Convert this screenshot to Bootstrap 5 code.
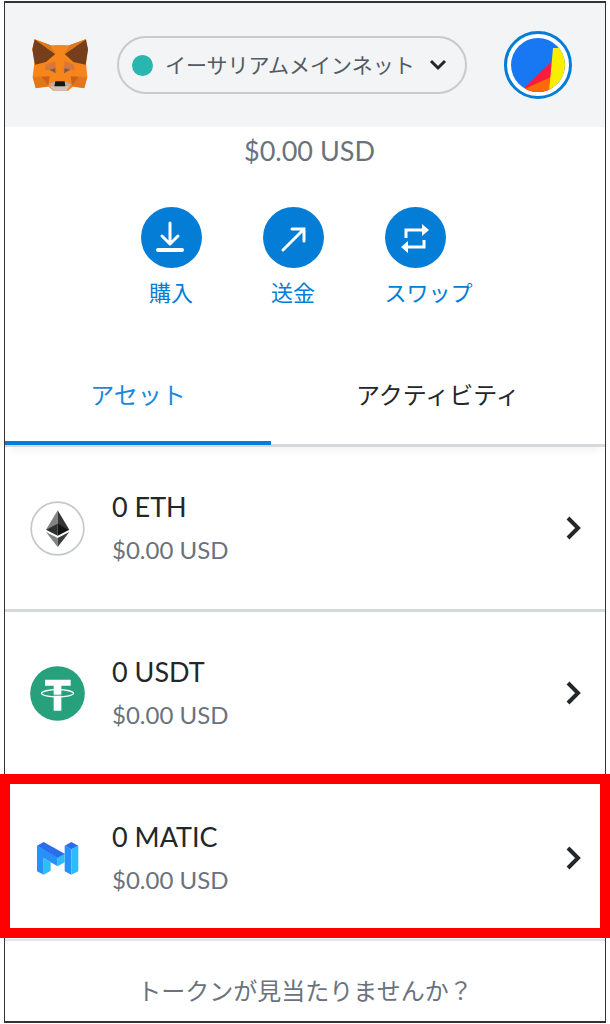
<!DOCTYPE html>
<html lang="ja">
<head>
<meta charset="utf-8">
<meta name="viewport" content="width=device-width, initial-scale=1">
<title>MetaMask</title>
<link rel="stylesheet" href="https://cdn.jsdelivr.net/npm/bootstrap@5.3.0/dist/css/bootstrap.min.css">
<style>
  body { font-family: Lato, "Noto Sans CJK JP", sans-serif; color: #24272a; background: #fff; padding: 1px 4px 0; }
  svg { display: block; }
  .wallet { border: 1px solid #333; border-top-width: 2px; border-bottom-width: 2px; }
  .top-bar { background: #f2f4f6; padding: 28px 33px 28px 26px; height: 124px; }
  .network { height: 58px; border: 2px solid #c8cacc; border-radius: 29px; margin: 0 37px 0 28px; padding: 0 18px 0 13px; background: none; font-size: 21px; color: #535a61; }
  .net-dot { width: 21px; height: 21px; border-radius: 50%; background: #29b6af; margin-right: 12px; }
  .avatar { width: 68px; height: 68px; border: 3px solid #037dd6; border-radius: 50%; background: #fff; padding: 4px; }
  .balance { font-size: 27px; line-height: 48px; color: #6a737d; padding-left: 9px; }
  .actions { gap: 61px; padding: 32px 24px 0 0; }
  .action { width: 61px; border: 0; padding: 0; background: none; color: #037dd6; font-size: 22px; line-height: 32px; white-space: nowrap; }
  .action svg { margin-bottom: 9px; }
  .action span { display: block; }
  .tabs { margin-top: 36px; border-bottom: 3px solid #d6d9dc; box-shadow: 0 10px 8px -6px #0000000d; }
  .tab { border: 0; background: none; padding: 26px 0 22px; font-size: 24px; line-height: 48px; color: #24272a; border-bottom: 4px solid transparent; margin-bottom: -1px; }
  .tab.active { color: #1a88dc; border-bottom-color: #037dd6; }
  .asset { padding: 38px 23px 38px 25px; border-bottom: 3px solid #d6d9dc; color: inherit; }
  .asset-text { margin-left: 27px; line-height: 43px; }
  .amount { font-size: 27px; }
  .fiat { font-size: 24px; color: #6a737d; }
  .marked { border-bottom-width: 2px; border-bottom-color: #e2e4e6; }
  .marked::after { content: ""; position: absolute; inset: -3px -5px 1px; border: 10px solid #f00; }
  .missing { padding: 30px 0 10px; font-size: 24px; line-height: 40px; color: #6a737d; }
</style>
</head>
<body>
<main class="wallet">
  <header class="top-bar d-flex align-items-center">
    <svg class="flex-shrink-0" width="58" height="54" viewBox="93 114 174 162" role="img" aria-label="MetaMask">
      <path fill="#f6851b" d="M104 118l48 18h56l48-18 8 30-6 42 4 40-10 34-34-4-14 12h-44l-14-12-38 4-10-34 5-40-6-42z"/>
      <path fill="#763e1a" d="M104 118l62 44-28 24-33 8-8-46zM258 118l-64 44 26 24 37 8 7-46z"/>
      <path fill="#e2761b" d="M104 118l48 18 14 26zM258 118l-50 18-14 26zM98 231l50-2-4 29-37 7zM262 231l-50-2 4 29 37 7z"/>
      <path fill="#cd6116" d="M125 231l24-2-4 27zM236 231l-24-2 4 27z"/>
      <path fill="#d7763d" d="M137 194l28-10 4 28-34-3zM222 194l-28-10-4 28 34-3z"/>
      <path fill="#f6851b" d="M164 136h31l-8 70 6 36h-28l7-36z"/>
      <path fill="#735d52" d="M149 209l16-4 2 15zM210 209l-16-4-2 15z"/>
      <path fill="#c0ad9e" d="M146 253l20-9h28l20 9-16 19h-36z"/>
      <path fill="#d7c1b3" d="M150 259h58l-10 13h-36z"/>
      <path fill="#161616" d="M166 244h28l2 15h-33z"/>
    </svg>
    <button type="button" class="network d-flex align-items-center flex-grow-1">
      <span class="net-dot"></span><span>イーサリアムメインネット</span>
      <svg class="ms-auto" width="18" height="12" viewBox="0 0 18 12" fill="none" stroke="#24272a" stroke-width="3" aria-hidden="true"><path d="M2 2l7 7 7-7"/></svg>
    </button>
    <button type="button" class="avatar flex-shrink-0" aria-label="アカウント">
      <svg width="54" height="54" viewBox="0 0 54 54" aria-hidden="true">
        <defs><clipPath id="disc"><circle cx="27" cy="27" r="27"/></clipPath></defs>
        <g clip-path="url(#disc)">
          <path fill="#1877f2" d="M0 0h54v54H0z"/>
          <path fill="#ff1b3d" d="M11 52L42 22v32H11z"/>
          <path fill="#fb6a05" d="M11 52l29-13v15H11z"/>
          <path fill="#f7ee00" d="M42 10h12v44H38z"/>
        </g>
      </svg>
    </button>
  </header>

  <div class="balance text-center">$0.00 USD</div>

  <div class="actions d-flex justify-content-center">
    <button type="button" class="action">
      <svg width="61" height="61" viewBox="0 0 61 61" fill="none" stroke="#fff" stroke-width="3" stroke-linecap="round" stroke-linejoin="round" aria-hidden="true"><circle cx="30.500" cy="30.500" r="30.500" fill="#037dd6" stroke="none"/><path d="M29 16v20M21 29l8 8 8-8"/><path stroke-width="4" d="M17 43h24"/></svg>
      <span>購入</span>
    </button>
    <button type="button" class="action">
      <svg width="61" height="61" viewBox="0 0 61 61" fill="none" stroke="#fff" stroke-width="3" stroke-linecap="round" aria-hidden="true"><circle cx="30.500" cy="30.500" r="30.500" fill="#037dd6" stroke="none"/><path d="M20 43l21-21M29 22h12v12"/></svg>
      <span>送金</span>
    </button>
    <button type="button" class="action">
      <svg width="61" height="61" viewBox="0 0 61 61" fill="none" stroke="#fff" stroke-width="3" aria-hidden="true"><circle cx="30.500" cy="30.500" r="30.500" fill="#037dd6" stroke="none"/><path d="M21 31v-8h17M39 33v7H22"/><path fill="#fff" stroke="none" d="M37 17l7 6-7 6zM23 34l-7 6 7 6z"/></svg>
      <span>スワップ</span>
    </button>
  </div>

  <div class="tabs d-flex" role="tablist">
    <button type="button" class="tab active flex-fill" role="tab" aria-selected="true">アセット</button>
    <button type="button" class="tab flex-fill" role="tab" aria-selected="false">アクティビティ</button>
  </div>

  <a href="#eth" class="asset d-flex align-items-center text-decoration-none">
    <svg width="55" height="55" viewBox="90 62 165 165" aria-hidden="true">
      <circle cx="172.500" cy="144.500" r="79" fill="#fff" stroke="#c4c8cc" stroke-width="5"/>
      <path fill="#828384" d="M173 90v43l-35 15z"/><path fill="#343434" d="M173 90v43l35 15z"/>
      <path fill="#2f3030" d="M173 130v36l-35-18z"/><path fill="#131313" d="M173 130v36l35-18z"/>
      <path fill="#828384" d="M138 155l35 18v27z"/><path fill="#3c3c3b" d="M208 155l-35 18v27z"/>
    </svg>
    <div class="asset-text"><div class="amount">0 ETH</div><div class="fiat">$0.00 USD</div></div>
    <svg class="ms-auto" width="16" height="24" viewBox="0 0 16 24" fill="none" stroke="#24272a" stroke-width="4" aria-hidden="true"><path d="M2 2l10 10L2 22"/></svg>
  </a>
  <a href="#usdt" class="asset d-flex align-items-center text-decoration-none">
    <svg width="55" height="55" viewBox="90 80 165 165" aria-hidden="true">
      <circle cx="172.500" cy="162.500" r="82" fill="#26a17b"/>
      <path fill="#fff" d="M135 121h77v18h-28v75h-23v-75h-26z"/>
      <ellipse cx="172.500" cy="162" rx="48" ry="11" fill="none" stroke="#fff" stroke-width="4"/>
      <path fill="none" stroke="#26a17b" stroke-width="3" d="M159 167q13 2 27 0"/>
    </svg>
    <div class="asset-text"><div class="amount">0 USDT</div><div class="fiat">$0.00 USD</div></div>
    <svg class="ms-auto" width="16" height="24" viewBox="0 0 16 24" fill="none" stroke="#24272a" stroke-width="4" aria-hidden="true"><path d="M2 2l10 10L2 22"/></svg>
  </a>
  <a href="#matic" class="asset marked position-relative d-flex align-items-center text-decoration-none">
    <svg width="55" height="55" viewBox="90 185 165 165" aria-hidden="true">
      <path fill="#2891f9" d="M111 229l20 11 42 24v27l-42-24v49l-20-10zM194 229l20 11v76l-20-10z"/>
      <path fill="#2bbdf7" d="M131 267l21 12v25l-21 12zM173 264l21-12v27l-21 12zM214 240l21-11v77l-21 10z"/>
      <path fill="#2b6def" d="M111 229l20-11 63 35-21 12zM194 229l20-11 21 11-21 11z"/>
    </svg>
    <div class="asset-text"><div class="amount">0 MATIC</div><div class="fiat">$0.00 USD</div></div>
    <svg class="ms-auto" width="16" height="24" viewBox="0 0 16 24" fill="none" stroke="#24272a" stroke-width="4" aria-hidden="true"><path d="M2 2l10 10L2 22"/></svg>
  </a>

  <div class="missing text-center">トークンが見当たりませんか？</div>
</main>
<script src="https://cdn.jsdelivr.net/npm/bootstrap@5.3.0/dist/js/bootstrap.bundle.min.js"></script>
</body>
</html>
